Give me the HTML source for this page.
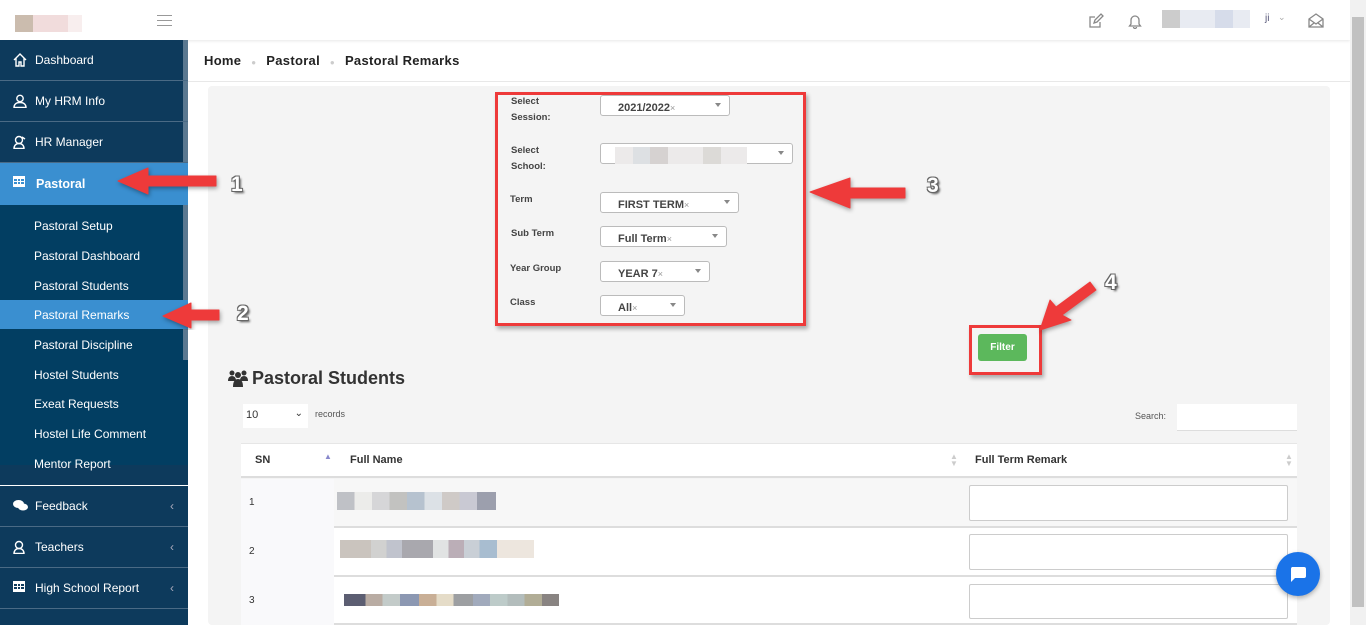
<!DOCTYPE html>
<html><head><meta charset="utf-8"><style>
*{box-sizing:border-box;margin:0;padding:0}
body{width:1366px;height:625px;overflow:hidden;background:#fff;font-family:"Liberation Sans",sans-serif;position:relative}
.a{position:absolute}
.sb{left:0;top:40px;width:188px;height:585px;background:#0d3a5c}
.mi{position:absolute;left:0;width:188px;height:41px;color:#fff;font-size:12px;border-bottom:1px solid #4a6a85;padding-left:35px;line-height:41px}
.mi svg{position:absolute;left:13px;top:13px}
.sub{position:absolute;left:34px;color:#fff;font-size:12px}
.lbl{position:absolute;font-size:9.5px;font-weight:bold;color:#444;line-height:16px}
.sel{position:absolute;height:21px;border:1px solid #bbb;border-radius:3px;background:#fff;font-size:11px;font-weight:bold;color:#444;padding:6px 0 0 17px}
.sel:after{content:"";position:absolute;right:8px;top:7px;border:3px solid transparent;border-top:4px solid #888}
.sel i{font-style:normal;color:#999;font-size:9px;font-weight:normal}
.red{position:absolute;border:3px solid #ee3a3a;box-shadow:2px 3px 4px rgba(0,0,0,.3)}
.num{position:absolute;font-size:21px;font-weight:bold;color:#fff;text-shadow:-1px -1px 0 #666,1px -1px 0 #666,-1px 1px 0 #666,1px 1px 0 #666,2px 2px 2px #555}
.row{position:absolute;left:241px;width:1056px;border-bottom:2px solid #ddd;background:#f7f7f7}
.ta{position:absolute;left:969px;width:319px;background:#fff;border:1px solid #ccc;border-radius:2px}
.blur{position:absolute;height:18px}
</style></head><body>
<div class="a" style="left:0;top:0;width:1350px;height:40px;background:#fff;box-shadow:0 1px 3px rgba(0,0,0,.1)"></div>
<div class="a" style="left:15px;top:15px;width:18px;height:17px;background:#cbbcae"></div>
<div class="a" style="left:33px;top:15px;width:35px;height:17px;background:#f1dcdc"></div>
<div class="a" style="left:68px;top:15px;width:14px;height:17px;background:#f8eeee"></div>
<div class="a" style="left:157px;top:15px;width:15px;height:1px;background:#999;box-shadow:0 5px 0 #999,0 10px 0 #999"></div>
<svg class="a" style="left:1088px;top:13px" width="16" height="16" viewBox="0 0 16 16" fill="none" stroke="#888" stroke-width="1.3"><path d="M12 9v5H2V4h5"/><path d="M6 10l1-3 6-6 2 2-6 6z"/></svg>
<svg class="a" style="left:1128px;top:13px" width="14" height="16" viewBox="0 0 14 16" fill="none" stroke="#888" stroke-width="1.3"><path d="M3 11V7a4 4 0 018 0v4l1.5 2h-11z M5.5 14a1.5 1.5 0 003 0"/></svg>
<div class="a" style="left:1162px;top:10px;width:18px;height:18px;background:#ccc"></div>
<div class="a" style="left:1180px;top:10px;width:70px;height:18px;background:#e8ebf2"></div>
<div class="a" style="left:1215px;top:10px;width:18px;height:18px;background:#d6dcea"></div>
<div class="a" style="left:1265px;top:13px;font-size:10px;color:#557">ji</div>
<div class="a" style="left:1278px;top:12px;font-size:9px;color:#aaa">⌄</div>
<svg class="a" style="left:1308px;top:12px" width="16" height="16" viewBox="0 0 16 16" fill="none" stroke="#888" stroke-width="1.3"><path d="M1 7l7-5 7 5v8H1z M1 7l7 5 7-5 M1 15l5-4 M15 15l-5-4"/></svg>
<div class="a" style="left:1350px;top:0;width:16px;height:625px;background:#f1f1f1"></div>
<div class="a" style="left:1352px;top:17px;width:12px;height:590px;background:#c1c1c1"></div>

<div class="a sb"></div>
<div class="a" style="left:0;top:205px;width:188px;height:260px;background:#023e62"></div>
<div class="a" style="left:183px;top:40px;width:5px;height:320px;background:#5a7890"></div>
<div class="mi" style="top:40px">Dashboard<svg width="14" height="14" viewBox="0 0 14 14" fill="none" stroke="#fff" stroke-width="1.4"><path d="M1 7L7 1l6 6M3 5v8h3V9h2v4h3V5"/></svg></div>
<div class="mi" style="top:81px">My HRM Info<svg width="14" height="14" viewBox="0 0 14 14" fill="none" stroke="#fff" stroke-width="1.4"><circle cx="7" cy="4.5" r="3.2"/><path d="M1 13.5h12c0-3-2-5-6-5s-6 2-6 5z"/></svg></div>
<div class="mi" style="top:122px">HR Manager<svg width="14" height="14" viewBox="0 0 14 14" fill="none" stroke="#fff" stroke-width="1.4"><circle cx="6" cy="5" r="3.5"/><path d="M1 13.5h10c0-3-2-5-5-5s-5 2-5 5zM9 2l3 2"/></svg></div>
<div class="mi" style="top:163px;height:42px;background:#3a8fd0;border:none;font-weight:bold;font-size:12.5px;line-height:42px;padding-left:36px">Pastoral<svg width="12" height="11" viewBox="0 0 12 11"><path d="M0 0h12v11H0z" fill="#fff"/><path d="M1 3h3v2H1zM5 3h2v2H5zM8 3h3v2H8zM1 6h3v2H1zM5 6h2v2H5zM8 6h3v2H8z" fill="#3a8fd0"/></svg></div>
<div class="sub" style="top:219px">Pastoral Setup</div>
<div class="sub" style="top:249px">Pastoral Dashboard</div>
<div class="sub" style="top:279px">Pastoral Students</div>
<div class="a" style="left:0;top:300px;width:188px;height:29px;background:#3a8fd0"></div>
<div class="sub" style="top:308px">Pastoral Remarks</div>
<div class="sub" style="top:338px">Pastoral Discipline</div>
<div class="sub" style="top:368px">Hostel Students</div>
<div class="sub" style="top:397px">Exeat Requests</div>
<div class="sub" style="top:427px">Hostel Life Comment</div>
<div class="sub" style="top:457px">Mentor Report</div>
<div class="a" style="left:0;top:485px;width:188px;height:1px;background:#fff"></div>
<div class="mi" style="top:486px">Feedback<span style="position:absolute;right:14px;color:#aab">‹</span><svg width="15" height="13" viewBox="0 0 15 13" fill="#fff"><ellipse cx="5.5" cy="5" rx="5.5" ry="4"/><ellipse cx="10" cy="8" rx="5" ry="3.5"/></svg></div>
<div class="mi" style="top:527px">Teachers<span style="position:absolute;right:14px;color:#aab">‹</span><svg width="14" height="14" viewBox="0 0 14 14" fill="none" stroke="#fff" stroke-width="1.4"><circle cx="6" cy="5" r="3.5"/><path d="M1 13.5h10c0-3-2-5-5-5s-5 2-5 5z"/></svg></div>
<div class="mi" style="top:568px">High School Report<span style="position:absolute;right:14px;color:#aab">‹</span><svg width="12" height="11" viewBox="0 0 12 11"><path d="M0 0h12v11H0z" fill="#fff"/><path d="M1 3h3v2H1zM5 3h2v2H5zM8 3h3v2H8zM1 6h3v2H1zM5 6h2v2H5zM8 6h3v2H8z" fill="#0d3a5c"/></svg></div>

<div class="a" style="left:204px;top:53px;font-size:13px;font-weight:bold;color:#222;letter-spacing:.3px">Home <span style="color:#ccc;font-size:8px;margin:0 6px">●</span> Pastoral <span style="color:#ccc;font-size:8px;margin:0 6px">●</span> Pastoral Remarks</div>
<div class="a" style="left:188px;top:81px;width:1162px;height:1px;background:#e8e8e8"></div>
<div class="a" style="left:208px;top:86px;width:1122px;height:539px;background:#f4f4f4;border-radius:4px"></div>

<div class="lbl" style="left:511px;top:94px">Select<br>Session:</div>
<div class="sel" style="left:600px;top:95px;width:130px">2021/2022<i>×</i></div>
<div class="lbl" style="left:511px;top:143px">Select<br>School:</div>
<div class="sel" style="left:600px;top:143px;width:193px"></div>
<div class="a" style="left:615px;top:147px;width:132px;height:17px;background:#eceaea"></div>
<div class="a" style="left:633px;top:147px;width:17px;height:17px;background:#dde0e3"></div>
<div class="a" style="left:650px;top:147px;width:18px;height:17px;background:#d6d2d1"></div>
<div class="a" style="left:703px;top:147px;width:18px;height:17px;background:#dcdad7"></div>
<div class="lbl" style="left:510px;top:192px">Term</div>
<div class="sel" style="left:600px;top:192px;width:139px">FIRST TERM<i>×</i></div>
<div class="lbl" style="left:511px;top:226px">Sub Term</div>
<div class="sel" style="left:600px;top:226px;width:127px">Full Term<i>×</i></div>
<div class="lbl" style="left:510px;top:261px">Year Group</div>
<div class="sel" style="left:600px;top:261px;width:110px">YEAR 7<i>×</i></div>
<div class="lbl" style="left:510px;top:295px">Class</div>
<div class="sel" style="left:600px;top:295px;width:85px">All<i>×</i></div>
<div class="red" style="left:495px;top:92px;width:311px;height:234px"></div>

<div class="a" style="left:978px;top:334px;width:49px;height:27px;background:#5cb85c;border-radius:3px;color:#fff;font-size:10px;font-weight:bold;text-align:center;line-height:27px">Filter</div>
<div class="red" style="left:969px;top:325px;width:73px;height:50px"></div>

<svg class="a" style="left:115px;top:160px" width="240" height="170" viewBox="0 0 240 170">
<g fill="#ee3a3a" stroke="#ee3a3a" stroke-linejoin="round" style="filter:drop-shadow(1px 2px 2px rgba(0,0,0,.35))">
<path d="M3 21L33 8v8h68v10H33v8z"/>
<path d="M48 156L76 143v7h28v10H76v8z"/>
</g></svg>
<svg class="a" style="left:805px;top:170px" width="320" height="200" viewBox="0 0 320 200">
<g fill="#ee3a3a" stroke="#ee3a3a" stroke-linejoin="round" style="filter:drop-shadow(1px 2px 2px rgba(0,0,0,.35))">
<path d="M5 22L45 8v10h55v10H45v10z"/>
<path d="M235 160L245 130l6 7 34-25 6 8-34 25 9 5z"/>
</g></svg>
<div class="num" style="left:231px;top:173px">1</div>
<div class="num" style="left:237px;top:302px">2</div>
<div class="num" style="left:927px;top:174px">3</div>
<div class="num" style="left:1105px;top:271px">4</div>

<svg class="a" style="left:228px;top:369px" width="20" height="18" viewBox="0 0 20 18" fill="#333"><circle cx="4" cy="4" r="2.5"/><circle cx="16" cy="4" r="2.5"/><circle cx="10" cy="6" r="3"/><path d="M0 12q0-5 4-5t4 5zM12 12q0-5 4-5t4 5zM5 18q0-8 5-8t5 8z"/></svg>
<div class="a" style="left:252px;top:368px;font-size:18px;font-weight:bold;color:#333">Pastoral Students</div>
<div class="a" style="left:243px;top:404px;width:65px;height:24px;background:#fff;font-size:11px;padding:5px 3px;color:#333">10<span style="position:absolute;right:5px;top:4px;font-size:10px">⌄</span></div>
<div class="a" style="left:315px;top:409px;font-size:9px;color:#555">records</div>
<div class="a" style="left:1135px;top:411px;font-size:9px;color:#555">Search:</div>
<div class="a" style="left:1177px;top:404px;width:120px;height:27px;background:#fff;border-bottom:1px solid #ddd"></div>

<div class="a" style="left:241px;top:443px;width:1056px;height:35px;background:#fff;border-bottom:2px solid #ddd;border-top:1px solid #e6e6e6"></div>
<div class="a" style="left:255px;top:454px;font-size:11px;font-weight:bold;color:#333">SN</div>
<div class="a" style="left:324px;top:452px;font-size:8px;color:#88c">▲</div>
<div class="a" style="left:350px;top:454px;font-size:11px;font-weight:bold;color:#333">Full Name</div>
<div class="a" style="left:950px;top:453px;font-size:8px;color:#ccc;line-height:7px">▲<br>▼</div>
<div class="a" style="left:975px;top:454px;font-size:11px;font-weight:bold;color:#333">Full Term Remark</div>
<div class="a" style="left:1285px;top:453px;font-size:8px;color:#ccc;line-height:7px">▲<br>▼</div>

<div class="row" style="top:479px;height:49px"></div>
<div class="row" style="top:528px;height:49px;background:#fff"></div>
<div class="row" style="top:577px;height:48px;background:#fff"></div>
<div class="a" style="left:241px;top:479px;width:93px;height:146px;background:#f9f9fb"></div>
<div class="a" style="left:249px;top:497px;font-size:10px;color:#333">1</div>
<div class="a" style="left:249px;top:546px;font-size:10px;color:#333">2</div>
<div class="a" style="left:249px;top:595px;font-size:10px;color:#333">3</div>
<div class="blur" style="left:337px;top:492px;width:159px;background:linear-gradient(90deg,#bfc1c6 0 11%,#ececea 11% 22%,#d6d6d8 22% 33%,#c2c2c0 33% 44%,#b6c2cf 44% 55%,#dce1e6 55% 66%,#cfcac7 66% 77%,#c9c9d3 77% 88%,#9c9fad 88%)"></div>
<div class="blur" style="left:340px;top:540px;width:194px;background:linear-gradient(90deg,#cac4be 0 16%,#d1d1d0 16% 24%,#c0c3cd 24% 32%,#a9a8ae 32% 48%,#e1e3e3 48% 56%,#bbaeb7 56% 64%,#c9cfd6 64% 72%,#a8bdd0 72% 81%,#ede6de 81%)"></div>
<div class="blur" style="left:344px;top:594px;width:215px;height:12px;background:linear-gradient(90deg,#5c5e72 0 10%,#b9aca3 10% 18%,#c3cbc9 18% 26%,#8c98b2 26% 35%,#c9af96 35% 43%,#e5dcc8 43% 51%,#9d9fa2 51% 60%,#a1aabc 60% 68%,#bdcbc9 68% 76%,#b3bdbc 76% 84%,#b1ad96 84% 92%,#898482 92%)"></div>
<div class="ta" style="top:485px;height:36px"></div>
<div class="ta" style="top:534px;height:36px"></div>
<div class="ta" style="top:584px;height:35px"></div>

<div class="a" style="left:1276px;top:552px;width:44px;height:44px;border-radius:50%;background:#1a73e8;box-shadow:0 2px 5px rgba(0,0,0,.3)"></div>
<svg class="a" style="left:1289px;top:565px" width="18" height="18" viewBox="0 0 18 18"><path d="M3 2h12a2 2 0 012 2v7a2 2 0 01-2 2H6l-4 4V4a2 2 0 011-2z" fill="#fff"/></svg>
</body></html>
